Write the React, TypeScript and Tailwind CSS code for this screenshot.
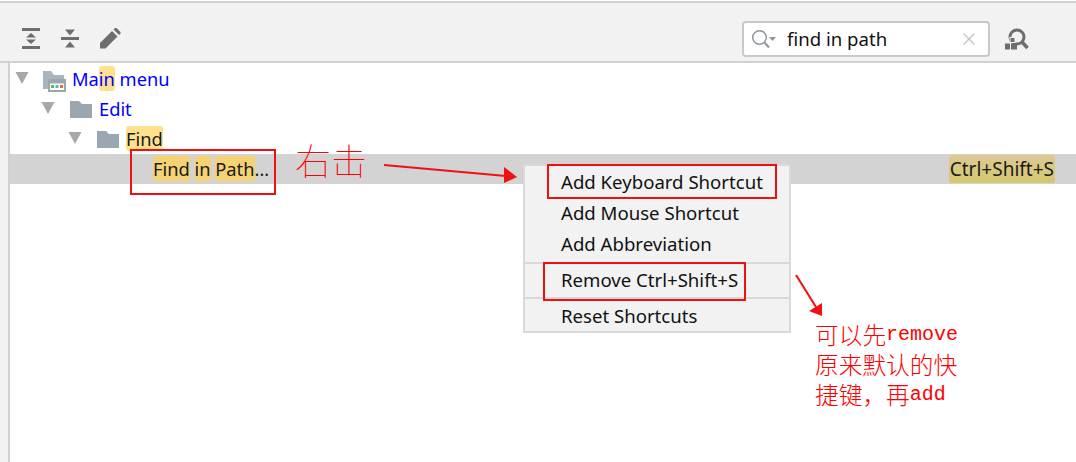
const ui = { fontFamily: '"Noto Sans", sans-serif' };
const cjk = { fontFamily: '"Noto Sans CJK SC", sans-serif' };
const mono = { fontFamily: '"Liberation Mono", monospace' };

function Hl({ children, className = "bg-[#ffe08f]" }: { children: React.ReactNode; className?: string }) {
  return <span className={"rounded-[3px] " + className}>{children}</span>;
}

function Tri() {
  return (
    <svg width="14" height="12" viewBox="0 0 14 12" className="-mt-[2px] shrink-0">
      <polygon points="0.5,0 13.5,0 7,12" fill="#a8a8a8" />
    </svg>
  );
}

function Folder() {
  return (
    <svg width="22" height="17" viewBox="0 0 22 17" className="shrink-0">
      <path d="M0 0H9L12 3H22V17H0Z" fill="#9aa7b0" />
    </svg>
  );
}

function MainIcon() {
  return (
    <svg width="23" height="21" viewBox="0 0 23 21" className="mt-[5px] shrink-0">
      <path d="M0 0H8L11 4H21V8H5V18H0Z" fill="#9aa7b0" opacity="0.85" />
      <rect x="6" y="9" width="16" height="11" fill="#fff" stroke="#9aa7b0" strokeWidth="2" />
      <rect x="7" y="10" width="14" height="2.5" fill="#9aa7b0" />
      <rect x="8" y="14" width="3" height="3" fill="#62b543" />
      <rect x="12.5" y="14" width="3" height="3" fill="#40b6e0" />
      <rect x="17" y="14" width="3" height="3" fill="#f26522" />
    </svg>
  );
}

function Expand() {
  return (
    <svg width="18" height="21" viewBox="0 0 18 21">
      <rect x="0" y="0" width="18" height="3" fill="#6e6e6e" />
      <rect x="0" y="18" width="18" height="3" fill="#6e6e6e" />
      <polygon points="9,5 14,9.5 4,9.5" fill="#6e6e6e" />
      <polygon points="9,16 14,11.5 4,11.5" fill="#6e6e6e" />
    </svg>
  );
}

function Collapse() {
  return (
    <svg width="18" height="19" viewBox="0 0 18 19">
      <rect x="0" y="8" width="18" height="3" fill="#6e6e6e" />
      <polygon points="9,6.5 14,0.5 4,0.5" fill="#6e6e6e" />
      <polygon points="9,12.5 14,18.5 4,18.5" fill="#6e6e6e" />
    </svg>
  );
}

function Pencil() {
  return (
    <svg width="21" height="21" viewBox="0 0 21 21">
      <path d="M0 20.5V15L12 3L17.5 8.5L5.5 20.5Z" fill="#6e6e6e" />
      <path d="M13.5 1.5L15 0H16.5L20.5 4V5.5L19 7Z" fill="#6e6e6e" />
    </svg>
  );
}

function SearchGlass() {
  return (
    <svg width="25" height="20" viewBox="0 0 25 20">
      <circle cx="8.5" cy="8.5" r="6.8" fill="none" stroke="#8b98a3" strokeWidth="1.5" />
      <line x1="13.5" y1="13.5" x2="18" y2="18.5" stroke="#8b98a3" strokeWidth="2" />
      <polygon points="18,8 25,8 21.5,12" fill="#8b98a3" />
    </svg>
  );
}

function FindShortcut() {
  return (
    <svg width="24" height="22" viewBox="0 0 24 22">
      <circle cx="12" cy="9" r="7" fill="none" stroke="#6e6e6e" strokeWidth="3" />
      <line x1="17" y1="14" x2="22.5" y2="20" stroke="#6e6e6e" strokeWidth="3.5" />
      <rect x="5" y="9.5" width="5" height="5" fill="#6e6e6e" stroke="#f2f2f2" />
      <rect x="0" y="15.5" width="5" height="6" fill="#6e6e6e" />
      <rect x="6" y="15.5" width="6" height="6" fill="#6e6e6e" />
    </svg>
  );
}

function MenuItem({ children, className = "h-[31px] leading-[31px]" }: { children: React.ReactNode; className?: string }) {
  return <div className={"pl-[36px] text-[#111] " + className}>{children}</div>;
}

const sel = "bg-[#f5d373]";

export default function App() {
  return (
    <div className="relative h-[462px] w-[1076px] overflow-hidden bg-white pt-px text-[18.6px] text-[#1a1a1a]" style={ui}>
      <div className="flex h-[62px] items-start border-y-2 border-[#d1d1d1] bg-[#f2f2f2]">
        <div className="flex items-center gap-[21px] pl-[22px] pt-[25px]">
          <Expand />
          <Collapse />
          <Pencil />
        </div>
        <div className="ml-auto mr-[47px] flex items-center gap-[15px] pt-[18px]">
          <div className="flex h-[36px] w-[248px] items-center rounded-[4px] border-2 border-[#c9c9c9] bg-white pl-[7px] pr-[13px]">
            <SearchGlass />
            <span className="ml-[11px] flex-1 text-[#111]">find in path</span>
            <svg width="12" height="12" viewBox="0 0 12 12">
              <path d="M0.5 0.5L11.5 11.5M11.5 0.5L0.5 11.5" stroke="#c4c4c4" strokeWidth="1.4" />
            </svg>
          </div>
          <FindShortcut />
        </div>
      </div>

      <div className="flex h-[399px] text-[18.3px]">
        <div className="w-[8px] bg-[#f2f2f2]" />
        <div className="flex-1 border-l-2 border-[#d1d1d1] pt-px">
          <div className="flex h-[30px] items-center pl-[5px]">
            <Tri />
            <div className="ml-[14px] flex"><MainIcon /></div>
            <span className="ml-[6px] text-[#0000ff]">Ma<Hl>in</Hl> menu</span>
          </div>
          <div className="flex h-[30px] items-center pl-[31px]">
            <Tri />
            <div className="ml-[15px] flex"><Folder /></div>
            <span className="ml-[7px] text-[#0000ff]">Edit</span>
          </div>
          <div className="flex h-[30px] items-center pl-[58px]">
            <Tri />
            <div className="ml-[15px] flex"><Folder /></div>
            <span className="ml-[7px]"><Hl>Find</Hl></span>
          </div>
          <div className="flex h-[30px] items-center bg-[#d3d3d3] pl-[143px] pr-[21px]">
            <span><Hl className={sel}>Find</Hl> <Hl className={sel}>in</Hl> <Hl className={sel}>Path</Hl>...</span>
            <Hl className="ml-auto bg-linear-to-b from-[#dfc894] to-[#d2c96c] px-px text-[19px]">Ctrl+Shift+S</Hl>
          </div>
        </div>
      </div>

      <div className="absolute left-[130px] top-[149px] h-[46px] w-[146px] border-2 border-[#f01010]" />

      <div className="absolute left-[295px] top-[138px] text-[36px] leading-[42px] font-thin text-[#ff0000]" style={cjk}>
        右击
      </div>

      <svg className="absolute left-[380px] top-[160px]" width="145" height="26" viewBox="0 0 145 26">
        <line x1="4" y1="5" x2="126" y2="16" stroke="#f01010" strokeWidth="2" />
        <polygon points="137,17 124,7 124,23" fill="#f01010" />
      </svg>

      <div className="absolute left-[523px] top-[164px] h-[169px] w-[268px] border-2 border-[#d9d9d9] bg-[#f2f2f2]">
        <MenuItem>Add Keyboard Shortcut</MenuItem>
        <MenuItem>Add Mouse Shortcut</MenuItem>
        <MenuItem>Add Abbreviation</MenuItem>
        <div className="mt-[3px] h-[2px] bg-[#d9d9d9]" />
        <MenuItem className="h-[32px] leading-[32px]">Remove Ctrl+Shift+S</MenuItem>
        <div className="mt-px h-[2px] bg-[#d9d9d9]" />
        <MenuItem className="mt-px h-[31px] leading-[31px]">Reset Shortcuts</MenuItem>
      </div>

      <div className="absolute left-[547px] top-[164px] h-[35px] w-[230px] border-2 border-[#f01010]" />
      <div className="absolute left-[543px] top-[262px] h-[39px] w-[203px] border-2 border-[#f01010]" />

      <svg className="absolute left-[790px] top-[270px]" width="40" height="50" viewBox="0 0 40 50">
        <line x1="6" y1="5" x2="26" y2="37" stroke="#f01010" strokeWidth="2" />
        <polygon points="32,46 32,33 19,41" fill="#f01010" />
      </svg>

      <div className="absolute left-[815px] top-[319px] text-[23.7px] leading-[29px] font-light whitespace-nowrap text-[#ff0000]" style={cjk}>
        <div className="flex h-[30px] items-center">可以先<span className="text-[20px] leading-[29px] font-normal" style={mono}>remove</span></div>
        <div className="flex h-[30px] items-center">原来默认的快</div>
        <div className="flex h-[30px] items-center">捷键，再<span className="text-[20px] leading-[29px] font-normal" style={mono}>add</span></div>
      </div>
    </div>
  );
}
